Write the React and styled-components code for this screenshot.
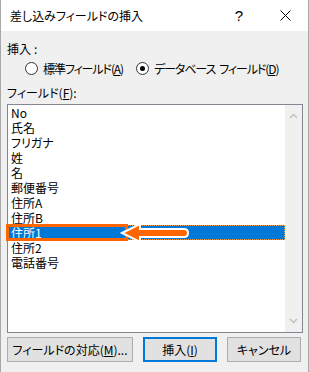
import React from 'react';
import styled, { createGlobalStyle } from 'styled-components';

const GlobalStyle = createGlobalStyle`
  html, body {
    margin: 0;
    padding: 0;
    background: #f0f0f0;
  }
  body {
    font-family: "Noto Sans CJK JP", "Noto Sans", sans-serif;
    font-size: 12px;
    color: #000;
    font-feature-settings: "palt";
  }
`;

const Window = styled.div`
  width: 309px;
  height: 372px;
  box-sizing: border-box;
  border-left: 1px solid #a8a8a8;
  border-right: 1px solid #a8a8a8;
  background: #f0f0f0;
  display: flex;
  flex-direction: column;
`;

const TitleBar = styled.div`
  height: 31px;
  background: #fff;
  display: flex;
  align-items: center;
  padding-left: 9px;
`;

const Title = styled.div`
  flex: 1;
  font-size: 12px;
  line-height: 15px;
`;

const TitleButton = styled.div`
  width: 46px;
  height: 31px;
  display: flex;
  align-items: center;
  justify-content: center;
  font-family: "Liberation Sans", sans-serif;
  font-size: 15px;
`;

const Body = styled.div`
  padding: 10px 0 0 6px;
  display: flex;
  flex-direction: column;
`;

const Label = styled.div`
  line-height: 15px;
  height: 15px;
  margin-top: ${p => p.$mt || 0}px;
`;

const Colon = styled.span`
  font-feature-settings: normal;
  padding-left: 3px;
`;

const RadioRow = styled.div`
  display: flex;
  align-items: center;
  height: 15px;
  margin-top: 5px;
  padding-left: 18px;
  gap: 13px;
`;

const RadioOption = styled.label`
  display: flex;
  align-items: center;
  gap: 5px;
  line-height: 15px;
  letter-spacing: -1.1px;
  white-space: nowrap;
`;

const Space = styled.span`
  display: inline-block;
  width: 4px;
`;

const RadioCircle = styled.span`
  width: 11px;
  height: 11px;
  border: 1px solid #333;
  border-radius: 50%;
  background: #fff;
  display: flex;
  align-items: center;
  justify-content: center;
  &::after {
    content: '';
    width: 5px;
    height: 5px;
    border-radius: 50%;
    background: ${p => (p.$checked ? '#000' : 'transparent')};
  }
`;

const Key = styled.span`
  text-decoration: underline;
  text-underline-offset: 1px;
`;

const ListBox = styled.div`
  position: relative;
  margin-top: 4px;
  width: 296px;
  height: 229px;
  box-sizing: border-box;
  border: 1px solid #828790;
  background: #fff;
  display: flex;
`;

const Items = styled.div`
  flex: 1;
  display: flex;
  flex-direction: column;
`;

const Item = styled.div`
  height: 15px;
  line-height: 15px;
  padding-left: 3px;
  background: ${p => (p.$selected ? '#0078d7' : 'transparent')};
  color: ${p => (p.$selected ? '#fff' : '#000')};
  outline: ${p => (p.$selected ? '1px dotted #f0a050' : 'none')};
  outline-offset: -1px;
`;

const ScrollBar = styled.div`
  width: 17px;
  background: #f0f0f0;
  display: flex;
  flex-direction: column;
  justify-content: space-between;
  align-items: center;
  padding: 8px 0;
`;

const Highlight = styled.div`
  position: absolute;
  left: -2px;
  top: 119px;
  width: 122px;
  height: 17px;
  box-sizing: border-box;
  border: 3px solid #ff6600;
`;

const Arrow = styled.svg`
  position: absolute;
  left: 102px;
  top: 115px;
`;

const ButtonRow = styled.div`
  display: flex;
  gap: 10px;
  margin-top: 4px;
`;

const Button = styled.div`
  width: ${p => p.$w}px;
  height: 25px;
  box-sizing: border-box;
  background: #e1e1e1;
  border: ${p => (p.$default ? '2px solid #0078d7' : '1px solid #adadad')};
  display: flex;
  align-items: center;
  justify-content: center;
  line-height: 15px;
`;

const Chevron = ({ down }) => (
  <svg width="9" height="6" viewBox="0 0 9 6">
    <path
      d={down ? 'M1 1 L4.5 4.5 L8 1' : 'M1 5 L4.5 1.5 L8 5'}
      fill="none"
      stroke="#c2c2c2"
      strokeWidth="1.5"
    />
  </svg>
);

const fields = ['No', '氏名', 'フリガナ', '姓', '名', '郵便番号', '住所A', '住所B', '住所1', '住所2', '電話番号'];

export default function App() {
  return (
    <>
      <GlobalStyle />
      <Window>
        <TitleBar>
          <Title>差し込みフィールドの挿入</Title>
          <TitleButton>?</TitleButton>
          <TitleButton>
            <svg width="11" height="11" viewBox="0 0 11 11">
              <path d="M0.5 0.5 L10.5 10.5 M10.5 0.5 L0.5 10.5" stroke="#000" strokeWidth="1" />
            </svg>
          </TitleButton>
        </TitleBar>
        <Body>
          <Label>挿入<Colon>:</Colon></Label>
          <RadioRow>
            <RadioOption>
              <RadioCircle />
              <span>標準フィールド(<Key>A</Key>)</span>
            </RadioOption>
            <RadioOption>
              <RadioCircle $checked />
              <span>データベース<Space />フィールド(<Key>D</Key>)</span>
            </RadioOption>
          </RadioRow>
          <Label $mt={9}>フィールド(<Key>F</Key>):</Label>
          <ListBox>
            <Items>
              {fields.map(f => (
                <Item key={f} $selected={f === '住所1'}>{f}</Item>
              ))}
            </Items>
            <ScrollBar>
              <Chevron />
              <Chevron down />
            </ScrollBar>
            <Highlight />
            <Arrow width="80" height="26" viewBox="0 0 80 26">
              <path
                d="M12 13 L30 4 L30 9 L74 9 Q78 9 78 13 Q78 17 74 17 L30 17 L30 22 Z"
                fill="#ff6600"
                stroke="#fff"
                strokeWidth="2"
                strokeLinejoin="miter"
              />
            </Arrow>
          </ListBox>
          <ButtonRow>
            <Button $w={126}>フィールドの対応(<Key>M</Key>)...</Button>
            <Button $w={74} $default>挿入(<Key>I</Key>)</Button>
            <Button $w={74}>キャンセル</Button>
          </ButtonRow>
        </Body>
      </Window>
    </>
  );
}
